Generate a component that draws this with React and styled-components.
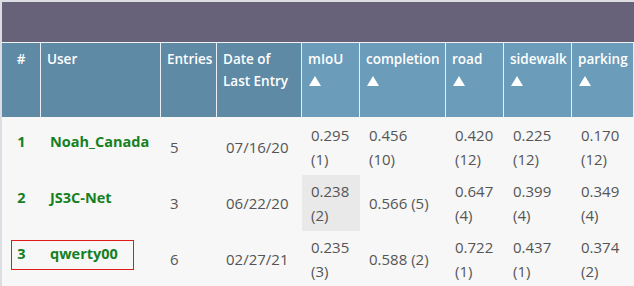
import React from "react"
import styled, { createGlobalStyle } from "styled-components"

let GlobalStyle = createGlobalStyle`
    body {
        margin: 0;
        background: #f7f7f7;
        font-family: "Open Sans", "Liberation Sans", sans-serif;
        overflow: hidden;
    }
`
let Board = styled.div`
    width: 632px;
    overflow: hidden;
    border-top: 2px solid #dcdde3;
    border-left: 2px solid #dcdde3;
    background: #f7f7f7;
`
let TitleBar = styled.div`
    height: 40px;
    background: #67617a;
    border-bottom: 1px solid #f2f2f2;
`
let Row = styled.div`
    display: grid;
    grid-template-columns: 39px 120px 56px 85px 58px 86px 58px 68px 62px;
    padding-top: ${(p) => (p.first ? "2px" : "0")};
`
let HeadCell = styled.div`
    height: 74px;
    box-sizing: border-box;
    padding: 5px 0 0 6px;
    background: ${(p) => (p.metric ? "#6b9cb9" : "#5e8aa5")};
    border-right: 1px solid #e8eef2;
    color: #fff;
    font-size: 13.5px;
    font-weight: 600;
    line-height: 22px;
    white-space: nowrap;
    text-align: ${(p) => (p.center ? "center" : "left")};
    padding-left: ${(p) => (p.center ? "0" : "6px")};
`
let Arrow = styled.span`
    display: block;
    width: 0;
    height: 0;
    margin: 6px 0 0 1px;
    border-left: 6px solid transparent;
    border-right: 6px solid transparent;
    border-bottom: 10px solid #fff;
`
let Cell = styled.div`
    position: relative;
    box-sizing: border-box;
    min-height: 56px;
    padding: 4px 0 4px 9px;
    display: flex;
    flex-direction: column;
    justify-content: center;
    font-size: 15px;
    line-height: 24px;
    color: #555;
    background: ${(p) => (p.marked ? "#e9e9e9" : "transparent")};
`
let NameCell = styled(Cell)`
    padding-bottom: 14px;
    color: #15801f;
    font-size: 14.5px;
    font-weight: 700;
    text-align: ${(p) => (p.center ? "center" : "left")};
    padding-left: ${(p) => (p.center ? "0" : "9px")};
`
let RedBox = styled.span`
    position: absolute;
    left: 9px;
    top: 9px;
    width: 121px;
    height: 28px;
    border: 1px solid #e01b1b;
    pointer-events: none;
`

let columns = ["mIoU", "completion", "road", "sidewalk", "parking"]

let rows = [
    { rank: 1, user: "Noah_Canada", entries: 5, date: "07/16/20",
      scores: [["0.295", "(1)"], ["0.456", "(10)"], ["0.420", "(12)"], ["0.225", "(12)"], ["0.170", "(12)"]] },
    { rank: 2, user: "JS3C-Net", entries: 3, date: "06/22/20", marked: 0,
      scores: [["0.238", "(2)"], ["0.566 (5)"], ["0.647", "(4)"], ["0.399", "(4)"], ["0.349", "(4)"]] },
    { rank: 3, user: "qwerty00", entries: 6, date: "02/27/21", boxed: true,
      scores: [["0.235", "(3)"], ["0.588 (2)"], ["0.722", "(1)"], ["0.437", "(1)"], ["0.374", "(2)"]] },
]

export default function App() {
    return (
        <Board>
            <GlobalStyle />
            <TitleBar />
            <Row>
                <HeadCell center>#</HeadCell>
                <HeadCell>User</HeadCell>
                <HeadCell>Entries</HeadCell>
                <HeadCell>Date of<br />Last Entry</HeadCell>
                {columns.map((c) => (
                    <HeadCell metric key={c}>{c}<Arrow /></HeadCell>
                ))}
            </Row>
            {rows.map((r, i) => (
                <Row key={r.rank} first={i === 0}>
                    <NameCell center>
                        {r.rank}
                        {r.boxed && <RedBox />}
                    </NameCell>
                    <NameCell>{r.user}</NameCell>
                    <Cell>{r.entries}</Cell>
                    <Cell>{r.date}</Cell>
                    {r.scores.map((s, j) => (
                        <Cell key={j} marked={r.marked === j}>
                            {s.map((line) => <span key={line}>{line}</span>)}
                        </Cell>
                    ))}
                </Row>
            ))}
        </Board>
    )
}
